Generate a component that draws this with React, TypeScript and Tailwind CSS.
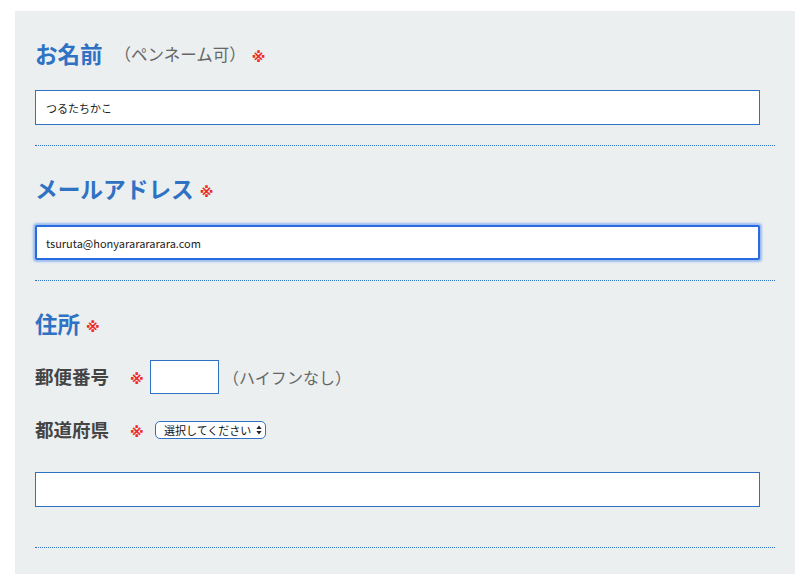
import React from 'react';

const font = { fontFamily: '"Noto Sans CJK JP", "Noto Sans", sans-serif' };

const Req = ({ className = '' }: { className?: string }) => (
  <span
    className={`text-[14px] font-bold text-[#ee2a24] leading-none font-['DejaVu_Sans','Noto_Sans_CJK_JP',sans-serif] ${className}`}
  >
    ※
  </span>
);

const Heading: React.FC<{ children: React.ReactNode }> = ({ children }) => (
  <div className="flex items-center h-[30px]">{children}</div>
);

export default function App() {
  return (
    <div className="min-h-[574px] bg-white pt-[11px] pl-[15px]" style={font}>
      <div className="w-[780px] min-h-[563px] bg-[#ebeff0] px-[20px] pt-[28px]">
        {/* name */}
        <section className="pb-[20px] border-b border-dotted border-[#2f72c4]">
          <Heading>
            <span className="text-[22.5px] font-bold text-[#2f72c4]">お名前</span>
            <span className="ml-[12px] text-[16.5px] text-[#666]">（ペンネーム可）</span>
            <Req className="ml-[6px] mt-[6px]" />
          </Heading>
          <input
            type="text"
            defaultValue="つるたちかこ"
            className="mt-[21px] block w-[725px] h-[35px] bg-white border border-[#2f72c4] px-[10px] text-[11px] text-[#222] outline-none"
          />
        </section>

        {/* mail */}
        <section className="pt-[28px] pb-[20px] border-b border-dotted border-[#2f72c4]">
          <Heading>
            <span className="text-[22.7px] font-bold text-[#2f72c4]">メールアドレス</span>
            <Req className="ml-[6px] mt-[6px]" />
          </Heading>
          <input
            type="text"
            defaultValue="tsuruta@honyararararara.com"
            className="mt-[21px] block w-[725px] h-[35px] bg-white border-2 border-[#2b6be0] rounded-[2px] shadow-[0_0_2px_2px_rgba(90,150,240,0.55)] px-[9px] text-[11px] text-[#222] outline-none"
          />
        </section>

        {/* address */}
        <section className="pt-[28px] pb-[40px] border-b border-dotted border-[#2f72c4]">
          <Heading>
            <span className="text-[22.5px] font-bold text-[#2f72c4]">住所</span>
            <Req className="ml-[6px] mt-[6px]" />
          </Heading>

          <div className="mt-[21px] flex items-center h-[34px]">
            <span className="w-[95px] text-[18.5px] font-bold text-[#444]">郵便番号</span>
            <Req className="w-[20px] mt-[3px]" />
            <input
              type="text"
              className="w-[69px] h-[34px] bg-white border border-[#2f72c4] outline-none"
            />
            <span className="ml-[4px] text-[16px] text-[#666]">（ハイフンなし）</span>
          </div>

          <div className="mt-[19px] flex items-center h-[34px]">
            <span className="w-[95px] text-[18.5px] font-bold text-[#444]">都道府県</span>
            <Req className="w-[25px] mt-[3px]" />
            <div className="flex items-center w-[111px] h-[18px] bg-white border border-[#2f72c4] rounded-[5px] pl-[8px] pr-[3px]">
              <span className="flex-1 text-[11px] leading-none text-[#111]">選択してください</span>
              <svg width="6" height="10" viewBox="0 0 6 10">
                <path d="M3 0.5 L5.6 4 H0.4 Z" fill="#222" />
                <path d="M3 9.5 L5.6 6 H0.4 Z" fill="#222" />
              </svg>
            </div>
          </div>

          <input
            type="text"
            className="mt-[25px] block w-[725px] h-[35px] bg-white border border-[#2f72c4] outline-none"
          />
        </section>
      </div>
    </div>
  );
}
